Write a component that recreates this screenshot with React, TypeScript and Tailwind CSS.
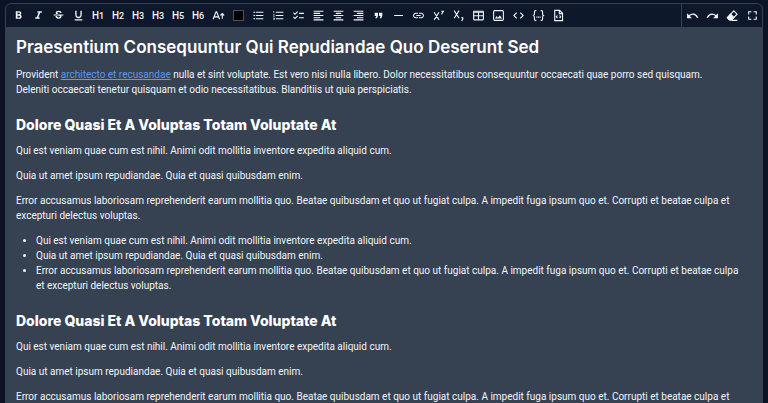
import type { ReactNode } from 'react';
import {
  MdFormatBold, MdFormatItalic, MdStrikethroughS, MdFormatUnderlined, MdFormatListBulleted,
  MdFormatListNumbered, MdChecklist, MdFormatAlignLeft, MdFormatAlignCenter, MdFormatAlignRight,
  MdFormatQuote, MdHorizontalRule, MdLink, MdCode,
} from 'react-icons/md';

function Tool({ label, children }: { label: string; children: ReactNode }) {
  return (
    <button type="button" aria-label={label} title={label} className="flex size-5 items-center justify-center text-[13px] text-slate-100">
      {children}
    </button>
  );
}

function Heading({ level }: { level: string }) {
  return (
    <Tool label={`Heading ${level}`}>
      <span className="flex items-baseline font-['Roboto','Liberation_Sans',sans-serif] text-[10px] leading-none font-medium">
        H<span className="text-[9px]">{level}</span>
      </span>
    </Tool>
  );
}

function Svg({ children }: { children: ReactNode }) {
  return (
    <svg viewBox="0 0 24 24" className="size-[13px]" fill="none" stroke="currentColor" strokeWidth="2">
      {children}
    </svg>
  );
}

const intro = 'Qui est veniam quae cum est nihil. Animi odit mollitia inventore expedita aliquid cum.';
const short = 'Quia ut amet ipsum repudiandae. Quia et quasi quibusdam enim.';
const long =
  'Error accusamus laboriosam reprehenderit earum mollitia quo. Beatae quibusdam et quo ut fugiat culpa. A impedit fuga ipsum quo et. Corrupti et beatae culpa et excepturi delectus voluptas.';

function Section() {
  return (
    <section>
      <h2 className="mt-5 font-['Inter','Liberation_Sans',sans-serif] text-[14px] leading-4 font-extrabold text-white">
        Dolore Quasi Et A Voluptas Totam Voluptate At
      </h2>
      <div className="mt-2.5 flex flex-col gap-2.5">
        <p>{intro}</p>
        <p>{short}</p>
        <p>{long}</p>
        <ul className="list-disc pl-5">
          <li>{intro}</li>
          <li>{short}</li>
          <li>{long}</li>
        </ul>
      </div>
    </section>
  );
}

export default function App() {
  return (
    <div className="h-screen overflow-hidden bg-[#0c1326] px-[5px] pt-[3px] font-['Roboto','Liberation_Sans',sans-serif]">
      <div className="overflow-hidden rounded-t-md border border-slate-700 bg-[#364152]">
        <div className="flex h-6 border-b border-slate-700 bg-slate-900">
          <div className="flex flex-1 items-center pl-0.5">
            <Tool label="Bold"><MdFormatBold /></Tool>
            <Tool label="Italic"><MdFormatItalic /></Tool>
            <Tool label="Strikethrough"><MdStrikethroughS /></Tool>
            <Tool label="Underline"><MdFormatUnderlined /></Tool>
            <Heading level="1" />
            <Heading level="2" />
            <Heading level="3" />
            <Heading level="3" />
            <Heading level="5" />
            <Heading level="6" />
            <Tool label="Lead">
              <Svg>
                <path d="M2 19 7.500 5h1L14 19M4 14.500h8M19 18V9M15.500 12 19 8.500l3.500 3.500" />
              </Svg>
            </Tool>
            <Tool label="Text color"><span className="size-[11px] border border-neutral-600 bg-black" /></Tool>
            <Tool label="Bullet list"><MdFormatListBulleted /></Tool>
            <Tool label="Numbered list"><MdFormatListNumbered /></Tool>
            <Tool label="Checklist"><MdChecklist /></Tool>
            <Tool label="Align left"><MdFormatAlignLeft /></Tool>
            <Tool label="Align center"><MdFormatAlignCenter /></Tool>
            <Tool label="Align right"><MdFormatAlignRight /></Tool>
            <Tool label="Blockquote"><MdFormatQuote /></Tool>
            <Tool label="Horizontal rule"><MdHorizontalRule /></Tool>
            <Tool label="Link"><MdLink /></Tool>
            <Tool label="Superscript">
              <Svg><path d="M4 6l9 14M13 6 4 20M17 4h4l-3 5v1" /></Svg>
            </Tool>
            <Tool label="Subscript">
              <Svg><path d="M4 3l9 14M13 3 4 17M17 16h3v2l-2 4" /></Svg>
            </Tool>
            <Tool label="Table">
              <Svg><rect x="3" y="4" width="18" height="16" rx="1" /><path d="M3 6h18M3 12.500h18M12 6v14" /></Svg>
            </Tool>
            <Tool label="Image">
              <Svg><rect x="3" y="3" width="18" height="18" rx="2" /><path fill="currentColor" stroke="none" d="M5.500 17.500h13l-4-6-3.500 4.500-2.500-3z" /></Svg>
            </Tool>
            <Tool label="Code"><MdCode /></Tool>
            <Tool label="Code block">
              <Svg><path d="M8 3H6.500C5 3 4.500 4 4.500 5v4c0 2-1 3-3 3 2 0 3 1 3 3v4c0 1 .5 2 2 2H8M16 3h1.500c1.500 0 2 1 2 2v4c0 2 1 3 3 3-2 0-3 1-3 3v4c0 1-.5 2-2 2H16M8 15h2M11 15h2M14 15h2" /></Svg>
            </Tool>
            <Tool label="Source">
              <Svg><path d="M5 2.500h9l5.500 5.500v13.500H5zM13.500 3v5.500H19M10 12l-2 2.500 2 2.500M14 12l2 2.500-2 2.500" /></Svg>
            </Tool>
          </div>
          <div className="flex items-center border-l border-slate-700">
            <Tool label="Undo">
              <Svg><path strokeWidth="2.500" d="M4.500 14C9 7.500 18 7.500 21.500 16" /><path fill="currentColor" stroke="none" d="M2 8v9h9z" /></Svg>
            </Tool>
            <Tool label="Redo">
              <Svg><path strokeWidth="2.500" d="M19.500 14C15 7.500 6 7.500 2.500 16" /><path fill="currentColor" stroke="none" d="M22 8v9h-9z" /></Svg>
            </Tool>
            <Tool label="Clear formatting">
              <Svg><path d="M14.500 3.500 20.500 9.500 10 20H6.500l-4-4z" /><path fill="currentColor" d="M8.500 9.500l6 6L10 20H6.500l-4-4zM11 21h10" /></Svg>
            </Tool>
            <Tool label="Fullscreen">
              <Svg><path d="M5 10V5h5M14 5h5v5M19 14v5h-5M10 19H5v-5" /></Svg>
            </Tool>
          </div>
        </div>
        <article className="pt-[7px] pr-5 pl-2.5 text-[10px] leading-[15px] text-slate-100">
          <h1 className="font-['Inter','Liberation_Sans',sans-serif] text-[17px] leading-6 font-semibold text-white">
            Praesentium Consequuntur Qui Repudiandae Quo Deserunt Sed
          </h1>
          <p className="mt-2 pr-5">
            Provident <a href="#" className="text-[#5b9bea] underline">architecto et recusandae</a> nulla et sint voluptate. Est vero nisi nulla libero. Dolor necessitatibus consequuntur occaecati quae porro sed quisquam. Deleniti occaecati tenetur quisquam et odio necessitatibus. Blanditiis ut quia perspiciatis.
          </p>
          <Section />
          <Section />
        </article>
      </div>
    </div>
  );
}
